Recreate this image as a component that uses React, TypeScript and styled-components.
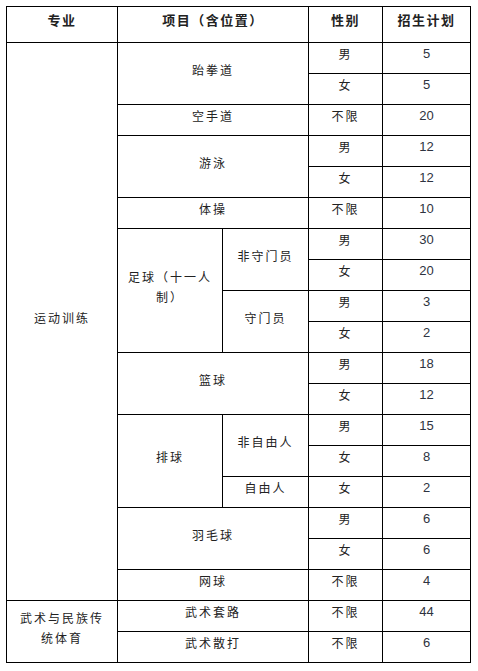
import React from "react";
import styled, { createGlobalStyle } from "styled-components";

const GlobalStyle = createGlobalStyle`
  html, body {
    margin: 0;
    padding: 0;
    background: #fff;
  }
`;

const Page = styled.div`
  padding: 6px 0 0 6px;
`;

const Table = styled.table`
  border-collapse: collapse;
  table-layout: fixed;
  width: 464px;
  font-family: "Noto Sans CJK SC", "Liberation Sans", sans-serif;
  color: #222;
`;

const HeadRow = styled.tr`
  height: 36px;
`;

const Row = styled.tr`
  height: 31px;
`;

const HeadCell = styled.th`
  border: 1px solid #000;
  padding: 0 4px 9px;
  font-size: 13px;
  font-weight: 700;
  letter-spacing: 1.5px;
  text-align: center;
  vertical-align: middle;
  line-height: 20px;
`;

const Cell = styled.td<{ $num?: boolean }>`
  border: 1px solid #000;
  padding: 0 8px 8px;
  text-align: center;
  vertical-align: middle;
  line-height: 20px;
  font-size: ${(p) => (p.$num ? "13px" : "12px")};
  letter-spacing: ${(p) => (p.$num ? "0" : "2px")};
  font-family: ${(p) =>
    p.$num ? '"Liberation Sans", Arial, sans-serif' : "inherit"};
  color: ${(p) => (p.$num ? "#2e3340" : "#222")};
  font-weight: 400;
`;

export default function App() {
  return (
    <Page>
      <GlobalStyle />
      <Table>
        <colgroup>
          <col style={{ width: 111 }} />
          <col style={{ width: 105 }} />
          <col style={{ width: 86 }} />
          <col style={{ width: 74 }} />
          <col style={{ width: 88 }} />
        </colgroup>
        <thead>
          <HeadRow>
            <HeadCell>专业</HeadCell>
            <HeadCell colSpan={2}>项目（含位置）</HeadCell>
            <HeadCell>性别</HeadCell>
            <HeadCell>招生计划</HeadCell>
          </HeadRow>
        </thead>
        <tbody>
          <Row>
            <Cell rowSpan={18}>运动训练</Cell>
            <Cell colSpan={2} rowSpan={2}>跆拳道</Cell>
            <Cell>男</Cell>
            <Cell $num>5</Cell>
          </Row>
          <Row>
            <Cell>女</Cell>
            <Cell $num>5</Cell>
          </Row>
          <Row>
            <Cell colSpan={2}>空手道</Cell>
            <Cell>不限</Cell>
            <Cell $num>20</Cell>
          </Row>
          <Row>
            <Cell colSpan={2} rowSpan={2}>游泳</Cell>
            <Cell>男</Cell>
            <Cell $num>12</Cell>
          </Row>
          <Row>
            <Cell>女</Cell>
            <Cell $num>12</Cell>
          </Row>
          <Row>
            <Cell colSpan={2}>体操</Cell>
            <Cell>不限</Cell>
            <Cell $num>10</Cell>
          </Row>
          <Row>
            <Cell rowSpan={4}>足球（十一人制）</Cell>
            <Cell rowSpan={2}>非守门员</Cell>
            <Cell>男</Cell>
            <Cell $num>30</Cell>
          </Row>
          <Row>
            <Cell>女</Cell>
            <Cell $num>20</Cell>
          </Row>
          <Row>
            <Cell rowSpan={2}>守门员</Cell>
            <Cell>男</Cell>
            <Cell $num>3</Cell>
          </Row>
          <Row>
            <Cell>女</Cell>
            <Cell $num>2</Cell>
          </Row>
          <Row>
            <Cell colSpan={2} rowSpan={2}>篮球</Cell>
            <Cell>男</Cell>
            <Cell $num>18</Cell>
          </Row>
          <Row>
            <Cell>女</Cell>
            <Cell $num>12</Cell>
          </Row>
          <Row>
            <Cell rowSpan={3}>排球</Cell>
            <Cell rowSpan={2}>非自由人</Cell>
            <Cell>男</Cell>
            <Cell $num>15</Cell>
          </Row>
          <Row>
            <Cell>女</Cell>
            <Cell $num>8</Cell>
          </Row>
          <Row>
            <Cell>自由人</Cell>
            <Cell>女</Cell>
            <Cell $num>2</Cell>
          </Row>
          <Row>
            <Cell colSpan={2} rowSpan={2}>羽毛球</Cell>
            <Cell>男</Cell>
            <Cell $num>6</Cell>
          </Row>
          <Row>
            <Cell>女</Cell>
            <Cell $num>6</Cell>
          </Row>
          <Row>
            <Cell colSpan={2}>网球</Cell>
            <Cell>不限</Cell>
            <Cell $num>4</Cell>
          </Row>
          <Row>
            <Cell rowSpan={2}>武术与民族传统体育</Cell>
            <Cell colSpan={2}>武术套路</Cell>
            <Cell>不限</Cell>
            <Cell $num>44</Cell>
          </Row>
          <Row>
            <Cell colSpan={2}>武术散打</Cell>
            <Cell>不限</Cell>
            <Cell $num>6</Cell>
          </Row>
        </tbody>
      </Table>
    </Page>
  );
}
